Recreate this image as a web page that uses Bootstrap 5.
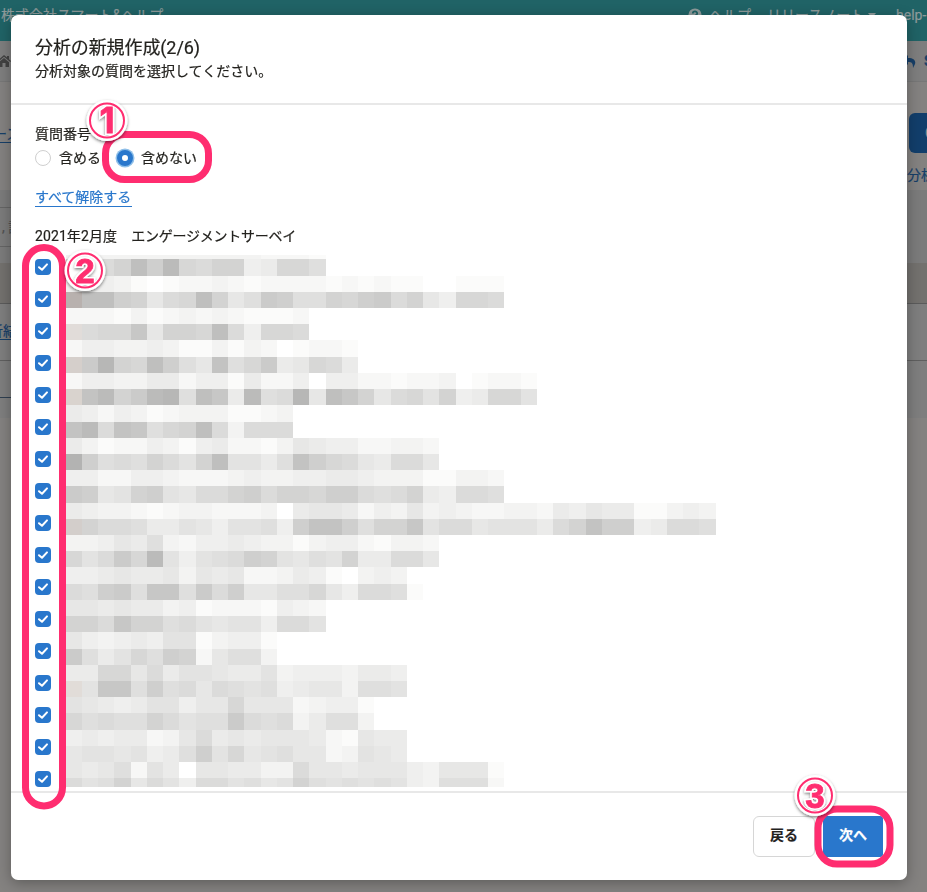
<!DOCTYPE html>
<html lang="ja">
<head>
<meta charset="utf-8">
<meta name="viewport" content="width=device-width, initial-scale=1">
<title>分析の新規作成</title>
<link href="https://cdn.jsdelivr.net/npm/bootstrap@5.3.0/dist/css/bootstrap.min.css" rel="stylesheet">
<style>
body{font-family:Roboto,"Noto Sans CJK JP",sans-serif;font-size:14px;line-height:20px;color:#23221e;background:#848280;height:892px;overflow:hidden;-webkit-text-stroke:.2px}
.bg-page{height:892px;overflow:hidden;color:#505050}
.bg-top{height:41px;background:#206366;color:#8d9a9a;white-space:nowrap;padding:5px 0 0 1px}
.bg-top .right-set{width:239px}
.bg-nav{height:41px;background:#7e7e7e;border-bottom:1px solid #777}
.bg-tools{height:108px;background:#848280}
.bg-filter{height:73px;background:#7b7b7b}
.bg-head{height:41px;background:#73716e;border-bottom:1px solid #5b5b5b}
.bg-row{height:57px;background:#7e7e7e;border-bottom:1px solid #5f5f5f}
.bg-link{color:#173f68}
.bg-edge-l{width:12px;overflow:hidden;white-space:nowrap}
.bg-edge-r{width:20px;overflow:hidden;white-space:nowrap}
.bg-btn{width:18px;height:40px;background:#123e6b;border-radius:6px 0 0 6px;color:#8b9299;padding:10px 0 0 16px;overflow:hidden}
.dlg{left:11px;top:15px;width:896px;height:865px;background:#fff;border-radius:7px;box-shadow:0 3px 14px rgba(0,0,0,.3)}
.dlg-head{height:90px;padding:20px 24px 0;border-bottom:2px solid #e8e8e8}
.dlg-title{font-size:18px;line-height:25px;font-weight:400;letter-spacing:-.1px}
.dlg-body{height:686px;padding:19px 24px 0}
.dlg-foot{height:89px;border-top:2px solid #e8e8e8;padding:23px 24px 0;gap:8px}
.rad{width:16px;height:16px;border:1px solid #cfcfcf;border-radius:50%;display:block}
.rad.on{border:5px solid #2977cc;box-shadow:0 0 0 1.5px #8fbfe8;background:#fff}
.all-off{color:#2977cc;border-bottom:1px solid #2977cc;text-decoration:none;line-height:20px;height:20px;width:97px;white-space:nowrap;letter-spacing:-.05px}
.chk{width:16px;height:16px;border-radius:4px;background:#2977cc;display:block}
.checks{gap:16px;padding-top:5px}
.btn.dbtn{height:41px;font-size:14px;font-weight:700;border-radius:6px;padding:0 0 4px;line-height:20px}
.btn.b-back{width:62px;border:1px solid #d6d6d6;background:#fff;color:#23221e}
.btn.b-next{width:60px;border:0;background:#2977cc;color:#fff;border-radius:3px}
.marks{left:0;top:0;z-index:5;pointer-events:none}
</style>
<script src="https://cdn.jsdelivr.net/npm/bootstrap@5.3.0/dist/js/bootstrap.bundle.min.js"></script>
</head>
<body>
<div class="bg-page">
  <div class="bg-top d-flex justify-content-between"><span>株式会社スマート&amp;ヘルプ</span>
    <div class="right-set d-flex">
      <svg width="14" height="14" viewBox="0 0 14 14" style="margin-top:3px"><circle cx="7" cy="7" r="6.6" fill="#8d9a9a"/><path d="M4.8 5.6C4.8 2.8 9.2 2.8 9.2 5.4C9.2 7 7 7 7 8.6M7 9.6V11" fill="none" stroke="#206366" stroke-width="1.8"/></svg>
      <span style="margin-left:7px">ヘルプ</span><span style="margin-left:16px;width:101px">リリースノート</span>
      <svg width="8" height="5" viewBox="0 0 8 5" style="margin-top:8px"><path d="M0 0H8L4 5Z" fill="#8d9a9a"/></svg>
      <span style="margin-left:20px">help-</span>
    </div>
  </div>
  <div class="bg-nav d-flex justify-content-between align-items-center">
    <svg width="12" height="14" viewBox="0 0 12 14"><path d="M-3 7L4 1L7 3.5V2H9V5.2L11 7L10.3 8L4 2.8L-3 9ZM-1 8.2L4 4L9 8.2V13H5.5V9H2.5V13H-1Z" fill="#424242"/></svg>
    <div class="d-flex align-items-center bg-link fw-bold bg-edge-r"><svg class="flex-shrink-0" width="9" height="13" viewBox="0 0 9 13"><path d="M-4 5L1 0V3C7 3 9 6 8 9L6 13C6 8 5 7 1 7V10Z" fill="#173f68"/></svg><span style="margin-left:8px">S</span></div>
  </div>
  <div class="bg-tools d-flex justify-content-between">
    <div class="bg-edge-l bg-link" style="padding-top:42px"><span style="border-bottom:1px solid #173f68;margin-left:-7px">ース</span></div>
    <div class="bg-edge-r" style="padding-top:31px"><div class="bg-btn ms-auto">C</div><div class="bg-link" style="padding-top:12px">分析</div></div>
  </div>
  <div class="bg-filter"><div style="padding-top:17px"><div class="bg-edge-l" style="border-top:1px solid #656565;border-bottom:1px solid #656565;height:40px;padding-top:9px"><span style="padding-left:2px">, 設</span></div></div></div>
  <div class="bg-head"></div>
  <div class="bg-row"><div class="bg-edge-l bg-link" style="padding-top:17px"><span style="border-bottom:1px solid #173f68;margin-left:-11px">析結</span></div></div>
  <div class="bg-row" style="border-color:#7e7e7e"><div class="bg-edge-l" style="height:37px;border-bottom:1px solid #2f3f50"></div></div>
</div>

<div class="dlg position-fixed d-flex flex-column" role="dialog" aria-modal="true">
  <header class="dlg-head flex-shrink-0">
    <h1 class="dlg-title m-0">分析の新規作成(2/6)</h1>
    <p class="m-0" style="padding-top:1px">分析対象の質問を選択してください。</p>
  </header>
  <div class="dlg-body flex-shrink-0 overflow-hidden">
    <div>質問番号</div>
    <div class="d-flex align-items-center" style="margin-top:4px">
      <span class="rad" role="radio"></span><span style="margin:0 17px 0 8px;width:41px;white-space:nowrap">含める</span>
      <span class="rad on" role="radio"></span><span style="margin-left:8px">含めない</span>
    </div>
    <a class="all-off d-block" href="#" style="margin-top:19px">すべて解除する</a>
    <div style="margin-top:19px"><span style="letter-spacing:.1px">2021年2月度　</span><span style="letter-spacing:-.25px">エンゲージメントサーベイ</span></div>
    <div class="d-flex" style="margin-top:8px;gap:14px">
      <div class="checks d-flex flex-column" id="checks"></div>
      <svg id="mosaic" width="680" height="533" viewBox="65 254 680 533" shape-rendering="crispEdges"></svg>
    </div>
  </div>
  <footer class="dlg-foot d-flex justify-content-end flex-shrink-0">
    <button class="btn dbtn b-back">戻る</button>
    <button class="btn dbtn b-next">次へ</button>
  </footer>
</div>

<svg class="marks position-fixed" width="927" height="892" viewBox="0 0 927 892">
  <defs>
    <filter id="sh" x="-30%" y="-30%" width="160%" height="160%"><feDropShadow dx="0" dy="1.5" stdDeviation="1.5" flood-color="#000" flood-opacity=".5"/></filter>
    <clipPath id="disc"><circle r="15"/></clipPath>
  </defs>
  <g fill="none" stroke="#ff2d70" stroke-width="7">
    <rect x="105.5" y="134.5" width="103" height="45" rx="19"/>
    <rect x="25.5" y="247.5" width="37" height="558.5" rx="18.5"/>
    <rect x="818" y="809" width="72" height="55" rx="19"/>
  </g>
  <g id="badges" font-weight="700" font-size="35" text-anchor="middle" fill="#ff2d70"></g>
</svg>

<script>
document.getElementById('checks').innerHTML=Array(17).fill('<span class="chk" role="checkbox" aria-checked="true"><svg class="d-block" width="16" height="16" viewBox="0 0 16 16"><path d="M4 8.2L7 10.8L12 5.4" fill="none" stroke="#fff" stroke-width="2" stroke-linecap="round" stroke-linejoin="round"/></svg></span>').join('');

// Blurred question titles: one letter per tile, later letters are darker
const tiles=[
'ccccccccccccbbba','mmikplqjikkdejjh','dddca.abbcbabbbbababaa..aaa','qpplkfijpkfhmlhhkjlmikfdjji','bbbacabcbcbaaab',
'hijjnfkkjpidjji','bddccdcaacacb.abba','jmrkjplhfohjmefjie','bddcceebddaebbd.ddbbabbc.abba','joqkmqrhpneqhirfpnkfijgkdejjg',
'edbdcabcccaabc','oqionhjkpiciii','ecabbdcadebbacfeddbbccb','slhihkigkpggeholjifeiif','ddbbddcbbbcdccddeedcccaaccb',
'mlfgklgfiiklikkjllihikediih','edccbabccbbbc.effebdcfcdcbbccbedfeeaacdc','lkiiheegfdgghdloolhkkngiifgggeikolldeiih','ccdfehcbddedccacddbaccb','jgimjqgdghilkgfhgkeeiif',
'ddefeefcfefbbceda.cdc','ihlmhnnhmilffhhjfdiiha','ffefeecdabbbadcb','kkinkkhigfggdiig','fdcdedggacdda',
'mhegjhlkbfhhc','eejjfieggfeegcdddceed','hgnnhlhifihghdeffchhg','gfedeggdffjfffbcdda','jhihhkighhmihicehhc',
'dedeebcfiefefffebafee','fggfgdehlgjfghffbcgfe','fefhbge.ffeecciffefffdcfffa','ighkfigdiighfgkhghghgdchhhb'];
const warm={3:[184,177,174],5:[225,220,217],7:[213,207,203],9:[217,211,206],17:[211,206,203],27:[225,220,216]};
let out='';
tiles.forEach((line,r)=>{
  const y=r?Math.round(259.3+16.22*(r-1)):255, y2=Math.min(787,Math.round(259.3+16.22*r));
  [...line].forEach((ch,c)=>{
    if(ch==='.')return;
    const v=255-4*(ch.charCodeAt(0)-96), x=Math.round(65.5+16.25*c), x2=Math.round(65.5+16.25*(c+1));
    const rgb=(c===0&&warm[r])||[v,v,v-1];
    out+=`<rect x="${x}" y="${y}" width="${x2-x}" height="${y2-y}" fill="rgb(${rgb})"/>`;
  });
});
document.getElementById('mosaic').innerHTML=out;

// Numbered step badges
document.getElementById('badges').innerHTML=[[107,121,1,'Inter'],[85,271,2,'Liberation Sans'],[815,796,3,'Liberation Sans']].map(([x,y,n,f])=>
`<g transform="translate(${x} ${y-.5})" font-family="${f}, sans-serif"><circle r="20.5" fill="#fff" filter="url(#sh)"/><g clip-path="url(#disc)"><text y="12" stroke="#fff" stroke-width="4" filter="url(#sh)">${n}</text></g><circle r="17" fill="none" stroke="#ff2d70" stroke-width="2"/><text y="12" stroke="#ff2d70" stroke-width=".8">${n}</text></g>`).join('');
</script>
</body>
</html>
